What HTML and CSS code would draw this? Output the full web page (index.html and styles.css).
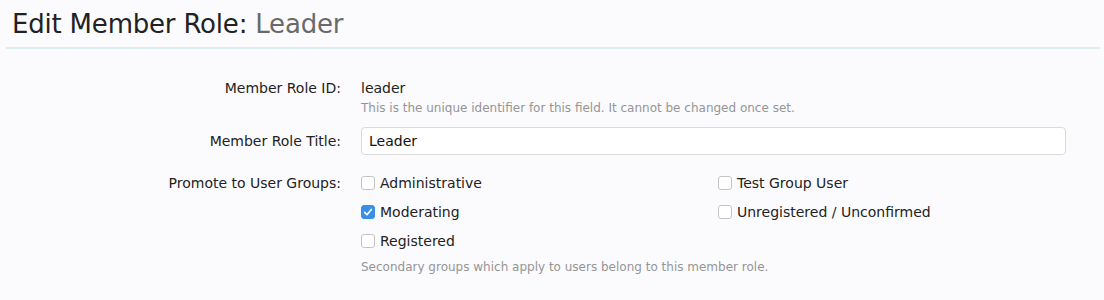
FILE: index.html
```html
<!DOCTYPE html>
<html lang="en">
<head>
    <meta charset="UTF-8">
    <link rel="stylesheet" href="styles.css">
</head>
<body>
    <div class="titleBar">
        <h1>Edit Member Role: <span class="titleSub">Leader</span></h1>
    </div>

    <form class="editForm">
        <div class="ctrlUnit">
            <div class="ctrlLabel">Member Role ID:</div>
            <div class="ctrlValue">
                <div class="plainValue">leader</div>
                <p class="explain">This is the unique identifier for this field. It cannot be changed once set.</p>
            </div>
        </div>

        <div class="ctrlUnit titleUnit">
            <div class="ctrlLabel">Member Role Title:</div>
            <div class="ctrlValue">
                <input class="textCtrl" type="text" value="Leader">
            </div>
        </div>

        <div class="ctrlUnit groupsUnit">
            <div class="ctrlLabel">Promote to User Groups:</div>
            <div class="ctrlValue">
                <ul class="checkList">
                    <li><label><span class="box"></span>Administrative</label></li>
                    <li><label><span class="box"></span>Test Group User</label></li>
                    <li><label><span class="box checked"><svg viewBox="0 0 14 14" width="14" height="14"><path d="M3.6 7.4 L6 9.8 L10.4 4.4" fill="none" stroke="#fff" stroke-width="1.6" stroke-linecap="round" stroke-linejoin="round"/></svg></span>Moderating</label></li>
                    <li><label><span class="box"></span>Unregistered / Unconfirmed</label></li>
                    <li><label><span class="box"></span>Registered</label></li>
                </ul>
                <p class="explain">Secondary groups which apply to users belong to this member role.</p>
            </div>
        </div>
    </form>
</body>
</html>
```

FILE: styles.css
```css
* {
    margin: 0;
    padding: 0;
    box-sizing: border-box;
}

body {
    font-family: "DejaVu Sans", Verdana, sans-serif;
    background-color: #fbfbfd;
    color: #222;
    width: 1104px;
    height: 300px;
    overflow: hidden;
}

.titleBar {
    margin: 0 4px 0 6px;
    padding: 9px 0 7px 6px;
    border-bottom: 2px solid #dbeff1;
}

.titleBar h1 {
    font-size: 26px;
    font-weight: normal;
    letter-spacing: -0.2px;
    color: #222;
    line-height: 31px;
}

.titleSub {
    color: #6a6a6a;
}

.editForm {
    padding-top: 29px;
}

.ctrlUnit {
    display: flex;
    font-size: 14px;
}

.ctrlLabel {
    width: 341px;
    text-align: right;
    line-height: 20px;
    color: #222;
}

.ctrlValue {
    margin-left: 20px;
    width: 705px;
}

.plainValue {
    line-height: 20px;
}

.explain {
    font-size: 12px;
    color: #959595;
    line-height: 16px;
    margin-top: 2px;
}

.titleUnit {
    margin-top: 11px;
}

.titleUnit .ctrlLabel {
    line-height: 28px;
}

.textCtrl {
    width: 705px;
    height: 28px;
    border: 1px solid #dadada;
    border-radius: 4px;
    background: #fff;
    font-family: inherit;
    font-size: 14px;
    color: #111;
    padding: 0 7px;
}

.groupsUnit {
    margin-top: 14px;
}

.groupsUnit .ctrlLabel {
    line-height: 28px;
}

.checkList {
    list-style: none;
    display: grid;
    grid-template-columns: 357px 1fr;
}

.checkList li {
    height: 29px;
}

.checkList label {
    display: flex;
    align-items: center;
    height: 28px;
}

.box {
    width: 14px;
    height: 14px;
    border: 1px solid #c4c4c4;
    border-radius: 3px;
    background: #fff;
    margin-right: 5px;
    display: flex;
}

.box.checked {
    background: #3b8ee8;
    border-color: #3b8ee8;
}

.box svg {
    margin: -1px;
}

.groupsUnit .explain {
    margin-top: 3px;
}
```
